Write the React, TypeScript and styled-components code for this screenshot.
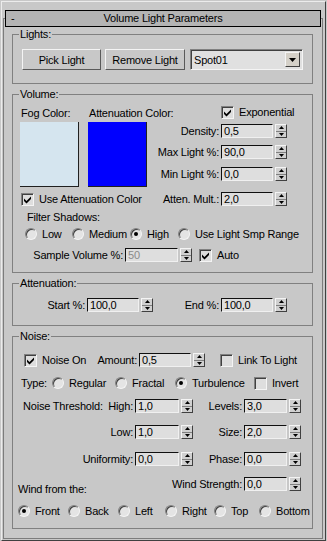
import React from 'react';
import styled, { createGlobalStyle } from 'styled-components';

const GlobalStyle = createGlobalStyle`
  html, body { margin: 0; padding: 0; background: #c8c8c8; }
  body { font-family: "Liberation Sans", Arial, sans-serif; font-size: 11px; letter-spacing: -0.2px; color: #000; }
`;

const Page = styled.div`
  width: 327px;
  height: 541px;
  box-sizing: border-box;
  padding-top: 1px;
  background: #c8c8c8;
  overflow: hidden;
`;

const Frame = styled.div`
  margin: 0 1px;
  border: 1px solid;
  border-color: #ececec #404040 #404040 #ececec;
  padding: 16px 2px 1px 1px;
`;

const Rollout = styled.div`
  border: 1px solid #7c7c7c;
  padding-bottom: 9px;
`;

const TitleBar = styled.div`
  position: relative;
  margin: -9px 1px 0 1px;
  height: 17px;
  box-sizing: border-box;
  border: 1px solid #000;
  background: #b4b4b4;
  display: grid;
  grid-template-columns: 1fr auto 1fr;
  align-items: center;
  line-height: 13px;
`;

const Collapse = styled.span`
  padding-left: 5px;
`;

const Title = styled.span`
  white-space: nowrap;
`;

const Group = styled.div<{ $mt: number; $pb: number }>`
  margin: ${(p) => p.$mt}px 9px 0 8px;
  border: 1px solid #808080;
  padding-bottom: ${(p) => p.$pb}px;
`;

const Legend = styled.div`
  width: fit-content;
  margin: -7px 0 0 6px;
  padding: 0 1px;
  height: 13px;
  line-height: 13px;
  background: #c8c8c8;
`;

const ButtonRow = styled.div`
  display: flex;
  align-items: center;
  margin-top: 8px;
  padding-left: 9px;
`;

const Btn = styled.button<{ $w: number; $ml?: number }>`
  width: ${(p) => p.$w}px;
  height: 21px;
  margin: 0 0 0 ${(p) => p.$ml ?? 0}px;
  padding: 0;
  box-sizing: border-box;
  border: 1px solid;
  border-color: #f4f4f4 #5a5a5a #5a5a5a #f4f4f4;
  background: #c8c8c8;
  font: inherit;
  letter-spacing: inherit;
  color: #000;
  white-space: nowrap;
`;

const Dropdown = styled.div`
  margin-left: 5px;
  width: 113px;
  height: 21px;
  box-sizing: border-box;
  border: 1px solid;
  border-color: #808080 #f4f4f4 #f4f4f4 #808080;
  box-shadow: inset 1px 1px 0 #404040;
  background: #e0e0e0;
  display: flex;
  align-items: center;
  padding: 0 2px 0 2px;
`;

const DropText = styled.span`
  flex: 1;
  padding-left: 1px;
`;

const DropArrow = styled.span`
  width: 15px;
  height: 15px;
  box-sizing: border-box;
  border: 1px solid;
  border-color: #f4f4f4 #404040 #404040 #f4f4f4;
  background: #d4d0c8;
  display: flex;
  align-items: center;
  justify-content: center;
`;

const VolumeTop = styled.div`
  display: flex;
`;

const Swatches = styled.div`
  display: flex;
  gap: 9px;
  padding-left: 7px;
  margin-top: 6px;
`;

const SwatchCol = styled.div`
  width: 59px;
  display: flex;
  flex-direction: column;
`;

const SwatchLabel = styled.span`
  padding-left: 1px;
  line-height: 13px;
  white-space: nowrap;
`;

const Swatch = styled.div<{ $color: string }>`
  margin-top: 2px;
  width: 59px;
  height: 65px;
  box-sizing: border-box;
  background: ${(p) => p.$color};
  border-right: 1px solid #202020;
  border-bottom: 1px solid #202020;
`;

const ControlCol = styled.div`
  flex: 1;
  display: flex;
  flex-direction: column;
  align-items: flex-end;
  padding-right: 25px;
  margin-top: 5px;
`;

const CheckSlot = styled.div`
  width: 66px;
  height: 13px;
  display: flex;
  align-items: center;
`;

const FieldWrap = styled.div<{ $mt: number }>`
  display: flex;
  align-items: center;
  height: 14px;
  margin-top: ${(p) => p.$mt}px;
  flex: none;
`;

const FieldLabel = styled.span<{ $w: number }>`
  width: ${(p) => p.$w}px;
  box-sizing: border-box;
  padding-right: 2px;
  display: flex;
  justify-content: flex-end;
  white-space: nowrap;
  line-height: 14px;
`;

const NumBox = styled.div<{ $w: number; $disabled?: boolean }>`
  width: ${(p) => p.$w}px;
  height: 14px;
  box-sizing: border-box;
  border: 1px solid;
  border-color: #101010 #f0f0f0 #f0f0f0 #101010;
  background: #dedede;
  color: ${(p) => (p.$disabled ? '#8a8a8a' : '#000')};
  padding-left: 2px;
  line-height: 12px;
  white-space: nowrap;
  overflow: hidden;
`;

const Spinner = styled.div`
  margin-left: 2px;
  width: 12px;
  height: 14px;
  box-sizing: border-box;
  border: 1px solid;
  border-color: #f4f4f4 #404040 #404040 #f4f4f4;
  background: #d0d0d0;
  display: flex;
  flex-direction: column;
`;

const SpinHalf = styled.div<{ $down?: boolean }>`
  flex: 1;
  display: flex;
  align-items: center;
  justify-content: center;
  border-top: ${(p) => (p.$down ? '1px solid #808080' : 'none')};
`;

const CheckItem = styled.label<{ $w?: number; $ml?: number }>`
  display: flex;
  align-items: center;
  gap: 5px;
  white-space: nowrap;
  line-height: 13px;
  flex: none;
  width: ${(p) => (p.$w ? `${p.$w}px` : 'auto')};
  margin-left: ${(p) => p.$ml ?? 0}px;
`;

const CheckBox = styled.span`
  width: 13px;
  height: 13px;
  box-sizing: border-box;
  border: 1px solid;
  border-color: #808080 #f4f4f4 #f4f4f4 #808080;
  box-shadow: inset 1px 1px 0 #404040;
  background: #dedede;
  display: flex;
  align-items: center;
  justify-content: center;
  flex: none;
`;

const RadioDot = styled.span<{ $on?: boolean }>`
  position: relative;
  width: 12px;
  height: 12px;
  box-sizing: border-box;
  border-radius: 50%;
  border: 1px solid;
  border-color: #808080 #f4f4f4 #f4f4f4 #808080;
  box-shadow: inset 1px 1px 0 #404040;
  background: #e4e4e4;
  flex: none;
  &::after {
    content: '';
    display: ${(p) => (p.$on ? 'block' : 'none')};
    position: absolute;
    left: 3px;
    top: 3px;
    width: 4px;
    height: 4px;
    border-radius: 50%;
    background: #000;
  }
`;

const Option = styled.label`
  display: flex;
  align-items: center;
  gap: 5px;
  white-space: nowrap;
  line-height: 13px;
`;

const RadioRow = styled.div<{ $mt: number; $pl: number; $cols: string }>`
  display: grid;
  grid-template-columns: ${(p) => p.$cols};
  align-items: center;
  height: 14px;
  margin-top: ${(p) => p.$mt}px;
  padding-left: ${(p) => p.$pl}px;
`;

const Row = styled.div<{ $mt: number; $pl?: number; $pr?: number; $between?: boolean }>`
  display: flex;
  align-items: center;
  height: 14px;
  margin-top: ${(p) => p.$mt}px;
  padding: 0 ${(p) => p.$pr ?? 0}px 0 ${(p) => p.$pl ?? 0}px;
  justify-content: ${(p) => (p.$between ? 'space-between' : 'flex-start')};
`;

const TextLine = styled.div<{ $mt: number; $pl: number }>`
  margin-top: ${(p) => p.$mt}px;
  padding-left: ${(p) => p.$pl}px;
  line-height: 14px;
  height: 14px;
`;

const NTLabel = styled.span`
  width: 96px;
  box-sizing: border-box;
  padding-left: 10px;
  white-space: nowrap;
  line-height: 14px;
`;

const WindRow = styled.div`
  display: flex;
  align-items: flex-end;
  justify-content: space-between;
  height: 14px;
  margin-top: 11px;
  padding: 0 11px 0 5px;
`;

const WindLabel = styled.span`
  line-height: 13px;
  margin-bottom: -5px;
  white-space: nowrap;
`;

const UpTri = () => (
  <svg width="5" height="3" viewBox="0 0 5 3">
    <path d="M2.5 0 L5 3 L0 3 Z" fill="#000" />
  </svg>
);
const DownTri = ({ w = 5, h = 3 }: { w?: number; h?: number }) => (
  <svg width={w} height={h} viewBox={`0 0 ${w} ${h}`}>
    <path d={`M0 0 L${w} 0 L${w / 2} ${h} Z`} fill="#000" />
  </svg>
);

function SpinField(props: {
  label: string;
  value: string;
  labelW: number;
  inputW: number;
  mt?: number;
  disabled?: boolean;
}) {
  return (
    <FieldWrap $mt={props.mt ?? 0}>
      <FieldLabel $w={props.labelW}>{props.label}</FieldLabel>
      <NumBox $w={props.inputW} $disabled={props.disabled}>
        {props.value}
      </NumBox>
      <Spinner>
        <SpinHalf>
          <UpTri />
        </SpinHalf>
        <SpinHalf $down>
          <DownTri />
        </SpinHalf>
      </Spinner>
    </FieldWrap>
  );
}

function Check(props: { label: string; checked?: boolean; w?: number; ml?: number }) {
  return (
    <CheckItem $w={props.w} $ml={props.ml}>
      <CheckBox>
        {props.checked && (
          <svg width="9" height="9" viewBox="0 0 9 9">
            <path d="M1 3.5 L3.5 6 L8 1.5 L8 4 L3.5 8.5 L1 6 Z" fill="#000" />
          </svg>
        )}
      </CheckBox>
      {props.label}
    </CheckItem>
  );
}

function Radio(props: { label: string; on?: boolean }) {
  return (
    <Option>
      <RadioDot $on={props.on} />
      {props.label}
    </Option>
  );
}

export default function App() {
  return (
    <>
      <GlobalStyle />
      <Page>
        <Frame>
          <Rollout>
            <TitleBar>
              <Collapse>-</Collapse>
              <Title>Volume Light Parameters</Title>
              <span />
            </TitleBar>

            <Group $mt={7} $pb={13}>
              <Legend>Lights:</Legend>
              <ButtonRow>
                <Btn $w={79}>Pick Light</Btn>
                <Btn $w={80} $ml={4}>
                  Remove Light
                </Btn>
                <Dropdown>
                  <DropText>Spot01</DropText>
                  <DropArrow>
                    <DownTri w={7} h={4} />
                  </DropArrow>
                </Dropdown>
              </ButtonRow>
            </Group>

            <Group $mt={10} $pb={10}>
              <Legend>Volume:</Legend>
              <VolumeTop>
                <Swatches>
                  <SwatchCol>
                    <SwatchLabel>Fog Color:</SwatchLabel>
                    <Swatch $color="#d5e5ef" />
                  </SwatchCol>
                  <SwatchCol>
                    <SwatchLabel>Attenuation Color:</SwatchLabel>
                    <Swatch $color="#0000ff" />
                  </SwatchCol>
                </Swatches>
                <ControlCol>
                  <CheckSlot>
                    <Check label="Exponential" checked />
                  </CheckSlot>
                  <SpinField mt={5} label="Density:" value="0,5" labelW={70} inputW={52} />
                  <SpinField mt={7} label="Max Light %:" value="90,0" labelW={70} inputW={52} />
                  <SpinField mt={8} label="Min Light %:" value="0,0" labelW={70} inputW={52} />
                </ControlCol>
              </VolumeTop>
              <Row $mt={5} $pl={8} $pr={25} $between>
                <Check label="Use Attenuation Color" checked />
                <SpinField label="Atten. Mult.:" value="2,0" labelW={70} inputW={52} />
              </Row>
              <TextLine $mt={4} $pl={14}>
                Filter Shadows:
              </TextLine>
              <RadioRow $mt={3} $pl={12} $cols="47px 58px 48px auto">
                <Radio label="Low" />
                <Radio label="Medium" />
                <Radio label="High" on />
                <Radio label="Use Light Smp Range" />
              </RadioRow>
              <Row $mt={7}>
                <SpinField label="Sample Volume %:" value="50" labelW={112} inputW={53} disabled />
                <Check label="Auto" checked ml={7} />
              </Row>
            </Group>

            <Group $mt={10} $pb={13}>
              <Legend>Attenuation:</Legend>
              <Row $mt={8}>
                <SpinField label="Start %:" value="100,0" labelW={74} inputW={52} />
                <SpinField label="End %:" value="100,0" labelW={68} inputW={52} />
              </Row>
            </Group>

            <Group $mt={10} $pb={10}>
              <Legend>Noise:</Legend>
              <Row $mt={10} $pl={11}>
                <Check label="Noise On" checked w={66} />
                <SpinField label="Amount:" value="0,5" labelW={49} inputW={52} />
                <Check label="Link To Light" ml={15} />
              </Row>
              <RadioRow $mt={9} $pl={8} $cols="31px 63px 60px 79px auto">
                <span>Type:</span>
                <Radio label="Regular" />
                <Radio label="Fractal" />
                <Radio label="Turbulence" on />
                <Check label="Invert" />
              </RadioRow>
              <Row $mt={9}>
                <NTLabel>Noise Threshold:</NTLabel>
                <SpinField label="High:" value="1,0" labelW={26} inputW={44} />
                <SpinField label="Levels:" value="3,0" labelW={51} inputW={43} />
              </Row>
              <Row $mt={12}>
                <SpinField label="Low:" value="1,0" labelW={122} inputW={44} />
                <SpinField label="Size:" value="2,0" labelW={51} inputW={43} />
              </Row>
              <Row $mt={13}>
                <SpinField label="Uniformity:" value="0,0" labelW={122} inputW={44} />
                <SpinField label="Phase:" value="0,0" labelW={51} inputW={43} />
              </Row>
              <WindRow>
                <WindLabel>Wind from the:</WindLabel>
                <SpinField label="Wind Strength:" value="0,0" labelW={80} inputW={43} />
              </WindRow>
              <RadioRow $mt={13} $pl={5} $cols="50px 50px 47px 49px 45px auto">
                <Radio label="Front" on />
                <Radio label="Back" />
                <Radio label="Left" />
                <Radio label="Right" />
                <Radio label="Top" />
                <Radio label="Bottom" />
              </RadioRow>
            </Group>
          </Rollout>
        </Frame>
      </Page>
    </>
  );
}
